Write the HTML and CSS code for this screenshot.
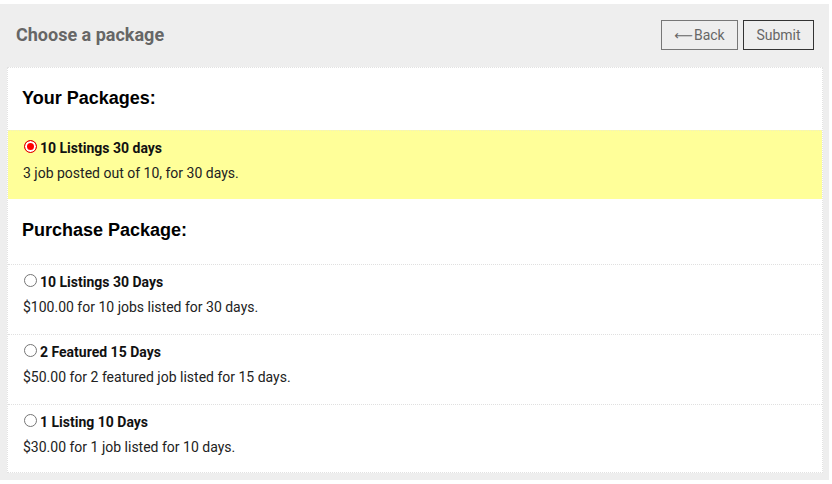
FILE: index.html
```html
<!DOCTYPE html>
<html>
<head>
<meta charset="utf-8">
<link rel="stylesheet" href="styles.css">
</head>
<body>
<div class="box">
  <div class="header">
    <h1 class="title">Choose a package</h1>
    <div class="actions">
      <button class="btn btn-back"><span class="arrow">&#x27F5;</span>Back</button>
      <button class="btn btn-submit">Submit</button>
    </div>
  </div>
  <div class="panel">
    <h2 class="section-title">Your Packages:</h2>
    <label class="row row-active">
      <span class="row-head"><input type="radio" name="pkg" checked class="radio"><span class="row-name">10 Listings 30 days</span></span>
      <span class="row-desc">3 job posted out of 10, for 30 days.</span>
    </label>
    <h2 class="section-title section-title-2">Purchase Package:</h2>
    <label class="row">
      <span class="row-head"><input type="radio" name="pkg" class="radio"><span class="row-name">10 Listings 30 Days</span></span>
      <span class="row-desc">$100.00 for 10 jobs listed for 30 days.</span>
    </label>
    <label class="row">
      <span class="row-head"><input type="radio" name="pkg" class="radio"><span class="row-name">2 Featured 15 Days</span></span>
      <span class="row-desc">$50.00 for 2 featured job listed for 15 days.</span>
    </label>
    <label class="row">
      <span class="row-head"><input type="radio" name="pkg" class="radio"><span class="row-name">1 Listing 10 Days</span></span>
      <span class="row-desc">$30.00 for 1 job listed for 10 days.</span>
    </label>
  </div>
</div>
</body>
</html>
```

FILE: styles.css
```css
* { box-sizing: border-box; }
html, body { margin: 0; padding: 0; background: #fff; }
body { padding-top: 4px; font-family: Roboto, "Liberation Sans", Arial, sans-serif; }

.box {
  width: 829px;
  height: 476px;
  background: #eeeeee;
  padding: 0 6px 7px 7px;
}

.header {
  height: 63px;
  display: flex;
  align-items: flex-start;
  justify-content: space-between;
  padding: 0 9px 0 9px;
}
.title {
  margin: 0;
  padding-top: 20px;
  font-size: 18px;
  line-height: 22px;
  font-weight: 700;
  color: #666;
}
.actions { display: flex; gap: 5px; padding-top: 16px; }
.btn {
  height: 30px;
  background: transparent;
  font-family: Roboto, sans-serif;
  font-size: 14px;
  color: #666;
  padding: 0 10px;
  border: 1px solid #777;
  cursor: pointer;
  display: flex;
  align-items: center;
  justify-content: center;
}
.arrow {
  font-family: "DejaVu Sans", sans-serif;
  font-size: 13px;
  margin-right: 1px;
  color: #666;
}
.btn-back { width: 77px; }
.btn-submit { width: 71px; border-color: #333; }

.panel {
  background: #fff;
  border: 1px dotted #e2e2e2;
  height: 406px;
}
.section-title {
  margin: 0;
  height: 62px;
  display: flex;
  align-items: center;
  padding: 0 14px 2px;
  font-family: "Liberation Sans", Arial, sans-serif;
  font-size: 18px;
  font-weight: 700;
  color: #000;
}
.section-title-2 { height: 65px; padding-top: 0; }

.row {
  display: flex;
  flex-direction: column;
  height: 70px;
  padding: 7px 15px 0;
  border-top: 1px dotted #e0e0e0;
  cursor: pointer;
}
.row-active {
  background: #ffff99;
  height: 69px;
  border-top: 1px dotted #f0f0c0;
}
.row-head { display: flex; align-items: center; height: 20px; }
.row-name { font-weight: 700; font-size: 14px; color: #111; }
.row-desc { font-size: 14px; line-height: 20px; margin-top: 5px; color: #222; }

.radio {
  appearance: none;
  -webkit-appearance: none;
  width: 13px;
  height: 13px;
  margin: 0 3px 3px 1px;
  border: 1px solid #767676;
  border-radius: 50%;
  background: #fff;
}
.radio:checked {
  border-color: #e00000;
  background: #ff0000;
  box-shadow: inset 0 0 0 2px #fff;
}
```
